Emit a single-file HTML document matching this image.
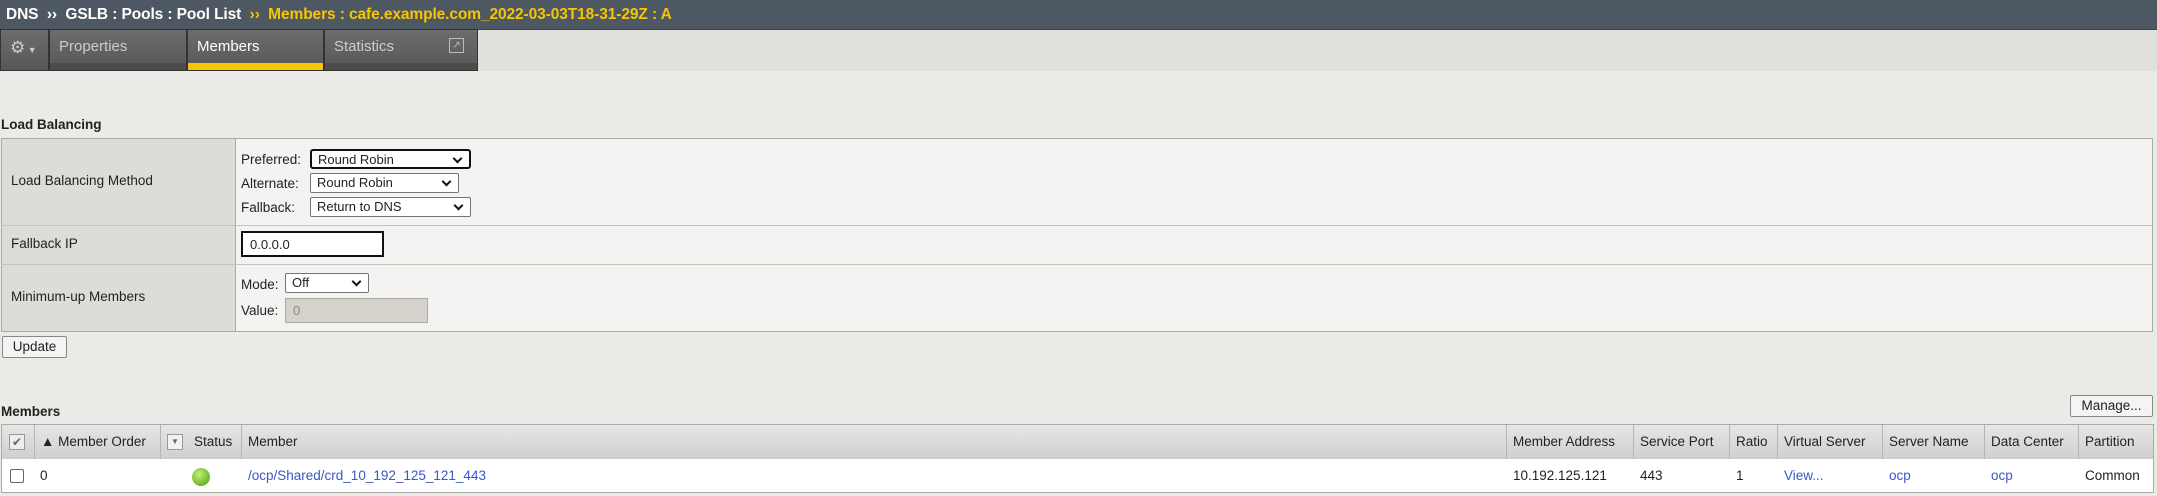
<!DOCTYPE html>
<html><head><meta charset="utf-8"><style>
*{box-sizing:border-box;margin:0;padding:0}
body{width:2157px;height:496px;background:#ebeae6;font-family:"Liberation Sans",Arial,sans-serif;font-size:13px;color:#222;position:relative;overflow:hidden}
.a{position:absolute}
.hdr{left:0;top:0;width:2157px;height:30px;background:#4e5863;border-bottom:1px solid #3a424b;color:#fff;font-weight:bold;font-size:15.5px;line-height:29px;padding-left:6px;letter-spacing:-0.1px}
.hdr .y{color:#f7c600}
.tabs{left:0;top:30px;width:2157px;height:41px;background:#e1e0dc}
.tab{top:29px;height:42px;background:linear-gradient(#6d6d6d,#575757);border:1px solid #333;color:#ccc;font-size:15px;padding:8px 0 0 9px}
.tab .u{position:absolute;left:0;right:0;bottom:0;height:7px;background:#4c4c4c}
.sel{background:#fff;border:1px solid #767676;border-radius:2px;font-size:13px;padding:1px 6px;height:20px;line-height:16px}
.sel:after{content:"";position:absolute;right:8px;top:4px;width:5px;height:5px;border-right:2px solid #111;border-bottom:2px solid #111;transform:rotate(45deg)}
.th{top:425px;height:34px;background:linear-gradient(#e6e6e6,#cfcfcf);border-right:1px solid #b5b5b5;line-height:33px;padding-left:6px;font-size:13.5px;color:#222}
.td{top:459px;height:33px;line-height:33px;font-size:13.5px}
.lk{color:#3a57c8}
</style></head><body>
<div class="a hdr">DNS &nbsp;›› &nbsp;GSLB : Pools : Pool List &nbsp;<span class="y">›› &nbsp;Members : cafe.example.com_2022-03-03T18-31-29Z : A</span></div>
<div class="a tabs"></div>
<div class="a tab" style="left:0;width:49px;padding:8px 0 0 9px;color:#ccc;font-size:17px">⚙<span style="font-size:9px"> ▼</span></div>
<div class="a tab" style="left:49px;width:138px;padding-left:9px">Properties<div class="u"></div></div>
<div class="a tab" style="left:187px;width:137px;color:#fff">Members<div class="u" style="background:#f7c600"></div></div>
<div class="a tab" style="left:324px;width:154px">Statistics<div class="u"></div><div class="a" style="right:13px;top:8px;width:15px;height:15px;border:1px solid #bbb;font-size:10px;line-height:13px;text-align:center;color:#bbb">↗</div></div>

<div class="a" style="left:1px;top:117px;font-weight:bold;font-size:13.5px">Load Balancing</div>
<div class="a" style="left:1px;top:138px;width:2152px;height:194px;background:#f4f3f1;border:1px solid #aaa"></div>
<div class="a" style="left:1px;top:138px;width:235px;height:194px;background:#dedcd8;border:1px solid #aaa"></div>
<div class="a" style="left:1px;top:225px;width:2152px;height:1px;background:#c4c2be"></div>
<div class="a" style="left:1px;top:264px;width:2152px;height:1px;background:#c4c2be"></div>
<div class="a" style="left:11px;top:173px;font-size:13.5px">Load Balancing Method</div>
<div class="a" style="left:11px;top:236px;font-size:13.5px">Fallback IP</div>
<div class="a" style="left:11px;top:289px;font-size:13.5px">Minimum-up Members</div>

<div class="a" style="left:241px;top:152px;font-size:13.5px">Preferred:</div>
<div class="a sel" style="left:310px;top:149px;width:161px;border:2px solid #111;border-radius:3px">Round Robin</div>
<div class="a" style="left:241px;top:176px;font-size:13.5px">Alternate:</div>
<div class="a sel" style="left:310px;top:173px;width:149px">Round Robin</div>
<div class="a" style="left:241px;top:200px;font-size:13.5px">Fallback:</div>
<div class="a sel" style="left:310px;top:197px;width:161px">Return to DNS</div>
<div class="a" style="left:241px;top:231px;width:143px;height:26px;background:#fff;border:2px solid #111;padding:4px 7px">0.0.0.0</div>
<div class="a" style="left:241px;top:277px;font-size:13.5px">Mode:</div>
<div class="a sel" style="left:285px;top:273px;width:84px">Off</div>
<div class="a" style="left:241px;top:303px;font-size:13.5px">Value:</div>
<div class="a" style="left:285px;top:298px;width:143px;height:25px;background:#d5d2cc;border:1px solid #aaa;padding:4px 7px;color:#888">0</div>
<div class="a" style="left:2px;top:336px;width:65px;height:22px;background:#f4f4f4;border:1px solid #888;border-radius:2px;text-align:center;line-height:20px;font-size:13.5px">Update</div>

<div class="a" style="left:1px;top:404px;font-weight:bold;font-size:13.5px">Members</div>
<div class="a" style="left:2070px;top:395px;width:83px;height:22px;background:#f4f4f4;border:1px solid #888;border-radius:2px;text-align:center;line-height:20px;font-size:13.5px">Manage...</div>
<div class="a" style="left:1px;top:424px;width:2153px;height:69px;border:1px solid #aaa;background:#fff"></div>
<div class="a th" style="left:2px;width:33px"><div class="a" style="left:7px;top:9px;width:16px;height:16px;border:1px solid #999;background:#eee;line-height:14px;font-size:12px;text-align:center;color:#666">✔</div></div>
<div class="a th" style="left:35px;width:126px">▲ Member Order</div>
<div class="a th" style="left:161px;width:81px;padding-left:33px"><div class="a" style="left:6px;top:9px;width:16px;height:16px;border:1px solid #999;background:#f2f2f2;font-size:8px;line-height:14px;text-align:center;color:#666">▼</div>Status</div>
<div class="a th" style="left:242px;width:1265px">Member</div>
<div class="a th" style="left:1507px;width:127px">Member Address</div>
<div class="a th" style="left:1634px;width:96px">Service Port</div>
<div class="a th" style="left:1730px;width:48px">Ratio</div>
<div class="a th" style="left:1778px;width:105px">Virtual Server</div>
<div class="a th" style="left:1883px;width:102px">Server Name</div>
<div class="a th" style="left:1985px;width:94px">Data Center</div>
<div class="a th" style="left:2079px;width:74px;border-right:0">Partition</div>
<div class="a" style="left:10px;top:469px;width:14px;height:14px;border:1px solid #666;border-radius:2px;background:#fff"></div>
<div class="a td" style="left:40px">0</div>
<div class="a" style="left:192px;top:468px;width:18px;height:18px;border-radius:50%;background:radial-gradient(circle at 40% 35%,#c4ee7a,#6fb52a 70%,#4e8f1c)"></div>
<div class="a td lk" style="left:248px">/ocp/Shared/crd_10_192_125_121_443</div>
<div class="a td" style="left:1513px">10.192.125.121</div>
<div class="a td" style="left:1640px">443</div>
<div class="a td" style="left:1736px">1</div>
<div class="a td lk" style="left:1784px">View...</div>
<div class="a td lk" style="left:1889px">ocp</div>
<div class="a td lk" style="left:1991px">ocp</div>
<div class="a td" style="left:2085px">Common</div>
</body></html>
